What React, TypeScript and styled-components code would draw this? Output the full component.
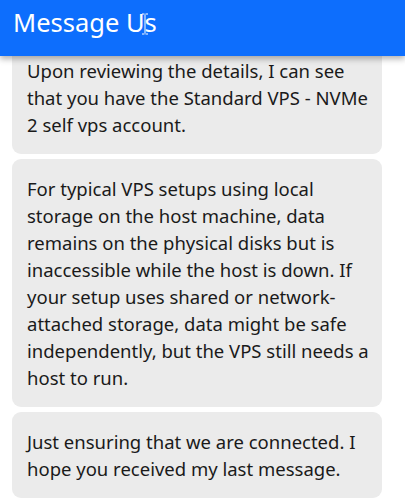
import React from "react";
import styled, { createGlobalStyle } from "styled-components";

const Global = createGlobalStyle`
  html, body { margin: 0; padding: 0; background: #ffffff; }
  body { font-family: "Noto Sans", "Open Sans", sans-serif; }
  * { box-sizing: border-box; }
`;

const Page = styled.div`
  width: 405px;
  height: 504px;
  display: flex;
  flex-direction: column;
  overflow: hidden;
  background: #ffffff;
`;

const Header = styled.header`
  position: relative;
  z-index: 2;
  flex: 0 0 56px;
  display: flex;
  align-items: center;
  padding: 0 0 12px 13px;
  background: #0d6efd;
  color: #ffffff;
  font-size: 25.5px;
  font-weight: 400;
  box-shadow: 0 3px 6px rgba(0, 0, 0, 0.3);
`;

const Title = styled.h1`
  position: relative;
  margin: 0;
  font: inherit;
  line-height: 34px;
`;

const Cursor = styled.svg`
  position: absolute;
  left: 128px;
  top: 8px;
`;

const Viewport = styled.div`
  flex: 1;
  overflow: hidden;
`;

const List = styled.div`
  display: flex;
  flex-direction: column;
  gap: 5px;
  margin-top: -15px;
  padding: 0 23px 0 12px;
`;

const Bubble = styled.div`
  background: #ebebeb;
  border-radius: 9px;
  padding: 16px 4px 16px 15px;
  color: #1a1a1a;
  font-size: 18.5px;
  line-height: 27px;
`;

const messages = [
  "Upon reviewing the details, I can see that you have the Standard VPS - NVMe 2 self vps account.",
  "For typical VPS setups using local storage on the host machine, data remains on the physical disks but is inaccessible while the host is down. If your setup uses shared or network-attached storage, data might be safe independently, but the VPS still needs a host to run.",
  "Just ensuring that we are connected. I hope you received my last message.",
];

export default function App() {
  return (
    <Page>
      <Global />
      <Header>
        <Title>
          Message Us
          <Cursor width="8" height="22" viewBox="0 0 8 22">
            <path d="M1 1h2.5M4.5 1H7M4 1.5v19M1 21h2.5M4.5 21H7" stroke="#ffffff" strokeWidth="1" fill="none" />
          </Cursor>
        </Title>
      </Header>
      <Viewport>
        <List>
          {messages.map((m, i) => (
            <Bubble key={i}>{m}</Bubble>
          ))}
        </List>
      </Viewport>
    </Page>
  );
}
